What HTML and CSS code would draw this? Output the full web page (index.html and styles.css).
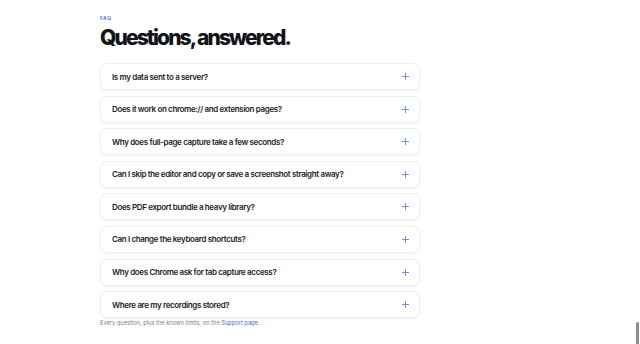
FILE: index.html
```html
<!DOCTYPE html>
<html>
<head>
<meta charset="utf-8">
<link rel="stylesheet" href="styles.css">
</head>
<body>
<main class="faq">
  <div class="eyebrow">FAQ</div>
  <h2 class="title">Questions, answered.</h2>
  <ul class="list">
    <li class="item"><span class="q">Is my data sent to a server?</span><span class="plus"></span></li>
    <li class="item"><span class="q">Does it work on chrome:// and extension pages?</span><span class="plus"></span></li>
    <li class="item"><span class="q">Why does full-page capture take a few seconds?</span><span class="plus"></span></li>
    <li class="item"><span class="q">Can I skip the editor and copy or save a screenshot straight away?</span><span class="plus"></span></li>
    <li class="item"><span class="q">Does PDF export bundle a heavy library?</span><span class="plus"></span></li>
    <li class="item"><span class="q">Can I change the keyboard shortcuts?</span><span class="plus"></span></li>
    <li class="item"><span class="q">Why does Chrome ask for tab capture access?</span><span class="plus"></span></li>
    <li class="item"><span class="q">Where are my recordings stored?</span><span class="plus"></span></li>
  </ul>
  <p class="note">Every question, plus the known limits, on the <a class="link" href="#">Support page</a>.</p>
</main>
<div class="scrollthumb"></div>
</body>
</html>
```
FILE: styles.css
```css
html, body {
  margin: 0;
  padding: 0;
  background: #ffffff;
}
body {
  font-family: Inter, "Noto Sans", sans-serif;
  color: #15171c;
}
.faq {
  width: 320px;
  margin-left: 100px;
  padding-top: 15px;
}
.eyebrow {
  font-size: 5px;
  font-weight: 600;
  letter-spacing: 0.12em;
  color: #3b6fd4;
  line-height: 6px;
}
.title {
  margin: 5px 0 13px;
  font-size: 21px;
  font-weight: 800;
  letter-spacing: -0.09em;
  line-height: 24px;
  color: #111318;
}
.list {
  list-style: none;
  margin: 0;
  padding: 0;
  display: flex;
  flex-direction: column;
  gap: 5.6px;
}
.item {
  height: 27px;
  box-sizing: border-box;
  display: flex;
  align-items: center;
  justify-content: space-between;
  padding: 0 10px 0 11px;
  background: #fff;
  border: 1px solid #eceef1;
  border-radius: 7px;
  box-shadow: 0 1px 3px rgba(20, 30, 50, 0.05);
}
.q {
  font-size: 8px;
  font-weight: 600;
  letter-spacing: -0.045em;
  color: #1b1d22;
}
.plus {
  position: relative;
  width: 7px;
  height: 7px;
}
.plus::before, .plus::after {
  content: "";
  position: absolute;
  background: #6f92dc;
}
.plus::before {
  left: 0;
  top: 3px;
  width: 7px;
  height: 1px;
}
.plus::after {
  left: 3px;
  top: 0;
  width: 1px;
  height: 7px;
}
.note {
  margin: 1px 0 0;
  font-size: 5.7px;
  color: #7a7f88;
}
.link {
  color: #3b6fd4;
  text-decoration: none;
}
.scrollthumb {
  position: fixed;
  right: 1px;
  bottom: 0;
  width: 3px;
  height: 22px;
  border-radius: 2px 2px 0 0;
  background: #8c8c8c;
}
```
